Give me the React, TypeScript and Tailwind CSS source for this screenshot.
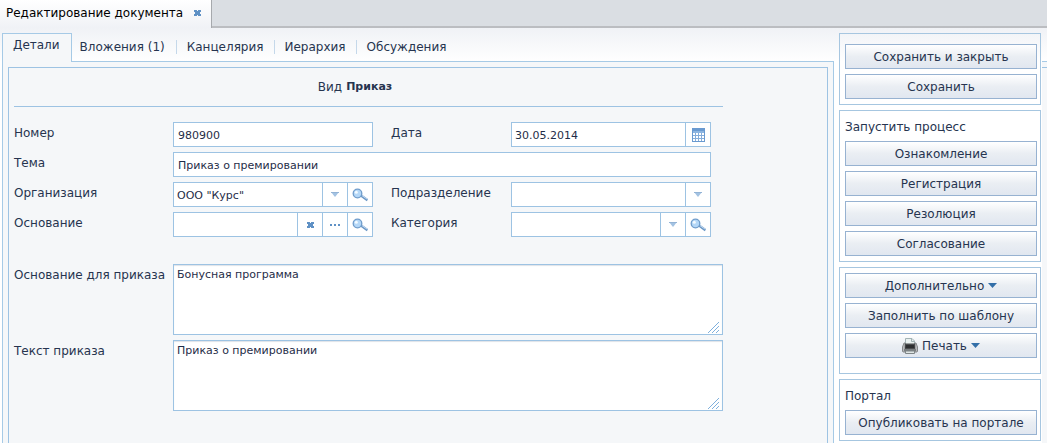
import React from "react";

const TEXT_FIELD =
  "h-[25px] w-full min-w-0 border border-[#9dc3e3] bg-white px-1 pt-px text-[11px] text-[#1f2d48] outline-none";
const CELL =
  "flex w-[25px] shrink-0 items-center justify-center border-l border-[#9dc3e3] bg-white";
const GROUP = "flex h-[25px] w-full min-w-0 border border-[#9dc3e3] bg-white";

function Cross() {
  return (
    <svg width="7" height="6" viewBox="0 0 7 6" shapeRendering="crispEdges" aria-hidden="true">
      <path d="M0 0h3v1h1V0h3v2H6v2h1v2H4V5H3v1H0V4h1V2H0z" fill="#5f91c5" />
    </svg>
  );
}

function Magnifier() {
  return (
    <svg width="16" height="14" viewBox="0 0 16 14" aria-hidden="true">
      <path d="M9 7.500l6.500 4.700" stroke="#6b97c6" strokeWidth="2.4" />
      <path d="M10 7.600l5.500 3.800" stroke="#c8def3" strokeWidth="1" />
      <circle cx="5.500" cy="5.500" r="4.300" fill="#b4d7f7" stroke="#6f9ccb" strokeWidth="1.3" />
      <circle cx="4.300" cy="4.200" r="1.500" fill="#f3faff" />
    </svg>
  );
}

function Calendar() {
  return (
    <svg width="13" height="14" viewBox="0 0 13 14" shapeRendering="crispEdges" aria-hidden="true">
      <path d="M0 0h13v14H0z" fill="#6a9ad0" />
      <path d="M1 3h11v2H1z" fill="#8db5e0" />
      <path d="M1 5h11v8H1z" fill="#86aedb" />
      <path
        d="M1 5h2v2H1zM4 5h2v2H4zM7 5h2v2H7zM10 5h2v2h-2zM1 8h2v2H1zM4 8h2v2H4zM7 8h2v2H7zM10 8h2v2h-2zM1 11h2v2H1zM4 11h2v2H4zM7 11h2v2H7zM10 11h2v2h-2z"
        fill="#fff"
      />
    </svg>
  );
}

function Printer() {
  return (
    <svg width="16" height="16" viewBox="0 0 16 16" aria-hidden="true">
      <path d="M3.500 7V.5h6.500l2.500 2.500V7z" fill="#eaf1f0" stroke="#a3b3b5" />
      <path d="M9.500 .5v3h3" fill="none" stroke="#a3b3b5" />
      <path d="M2 5h1v9H1L.5 13V9zM13 5h1l1.500 4v4l-.5 1h-2z" fill="#b9bbbd" stroke="#85888a" />
      <path d="M3 5.500h10V12H3z" fill="#4a4c4e" />
      <path d="M4 7h8l.5 3h-9z" fill="#2c2e30" />
      <path d="M2 11h12v2H2z" fill="#7a7e80" />
      <path d="M3.500 13h9v2.500h-9z" fill="#dfe5e4" stroke="#7f8688" />
    </svg>
  );
}

function Caret() {
  return (
    <svg width="9" height="5" viewBox="0 0 9 5" aria-hidden="true">
      <path d="M0 0h9L4.500 5z" fill="#336fa8" />
    </svg>
  );
}

function SideButton({ children }: { children: React.ReactNode }) {
  return (
    <button
      type="button"
      className="flex h-[25px] w-full items-center justify-center gap-1 border border-[#97b2d1] bg-linear-to-b from-white via-[#eaeef3] to-[#e1e7f0] leading-4 whitespace-nowrap"
    >
      {children}
    </button>
  );
}

function Label({ htmlFor, children, second }: { htmlFor: string; children: string; second?: boolean }) {
  return (
    <label
      htmlFor={htmlFor}
      className={second ? "pl-[18px] pt-[3px] leading-4 whitespace-nowrap" : "pt-[3px] leading-4 whitespace-nowrap"}
    >
      {children}
    </label>
  );
}

function Combo({ id, options }: { id: string; options: string[] }) {
  return (
    <div className="relative flex min-w-0 flex-1">
      <select
        id={id}
        className="w-full min-w-0 appearance-none bg-white pt-[2px] pr-7 pl-[3px] text-[11px] text-[#1f2d48] outline-none"
      >
        {options.map((o) => (
          <option key={o}>{o}</option>
        ))}
      </select>
      <span className="pointer-events-none absolute inset-y-0 right-0 flex w-[25px] items-center justify-center border-l border-[#9dc3e3]">
        <svg width="8" height="5" viewBox="0 0 8 5" aria-hidden="true">
          <path d="M0 0h8L4 5z" fill="#a3c2e2" />
          <path d="M0 0h8v1H0z" fill="#93b3d5" />
        </svg>
      </span>
    </div>
  );
}

function Area({ id, value }: { id: string; value: string }) {
  return (
    <div className="relative flex h-[71px]">
      <textarea
        id={id}
        defaultValue={value}
        className="w-full resize-none border border-[#9dc3e3] bg-white px-[3px] py-[3px] text-[11px] leading-[14px] text-[#1f2d48] shadow-[inset_0_1px_1px_#dfe3e8] outline-none"
      />
      <svg
        width="11"
        height="11"
        viewBox="0 0 11 11"
        aria-hidden="true"
        className="pointer-events-none absolute right-1 bottom-[2px]"
      >
        <path d="M0 11L11 0M4 11l7-7M8 11l3-3" stroke="#7fb0dd" strokeWidth="1" />
      </svg>
    </div>
  );
}

const BOX = "flex flex-col gap-[5px] border border-[#a6c6e0] pr-[3px] pl-[5px]";

export default function App() {
  return (
    <div className="flex min-h-screen flex-col bg-white font-['DejaVu_Sans',Verdana,sans-serif] text-[12px] leading-4 text-[#26344f]">
      <header className="flex h-7 shrink-0 bg-[#dadee3]">
        <div className="flex items-center gap-[11px] border-r border-[#a6a9ad] bg-linear-to-b from-white to-[#f0f2f6] pr-[10px] pb-[3px] pl-[6px] whitespace-nowrap text-black">
          Редактирование документа
          <button type="button" aria-label="Закрыть">
            <Cross />
          </button>
        </div>
        <div className="flex-1 border-b-2 border-[#bbbdc1]" />
      </header>

      <div className="flex flex-1 bg-linear-to-b from-[#f0f2f6] to-white to-[34px]">
        <main className="flex min-w-0 flex-1 flex-col pt-[5px] pl-[2px]">
          <nav className="flex h-[28px] items-stretch">
            <a
              href="#details"
              className="relative z-10 -mb-px flex border border-b-0 border-[#a6cae6] bg-[#f5f7f9] pt-[3px] pr-[11px] pl-[10px]"
            >
              Детали
            </a>
            <div className="flex flex-1 items-center pl-[8px] whitespace-nowrap">
              <a href="#files" className="border-r border-[#c5d8ea] pr-[11px] leading-[14px]">Вложения (1)</a>
              <a href="#office" className="border-r border-[#c5d8ea] px-[10px] leading-[14px]">Канцелярия</a>
              <a href="#tree" className="border-r border-[#c5d8ea] px-[10px] leading-[14px]">Иерархия</a>
              <a href="#talks" className="px-[10px] leading-[14px]">Обсуждения</a>
            </div>
          </nav>
          <div className="flex flex-1 flex-col border border-b-0 border-[#a6cae6] bg-[#f5f7f9] px-[5px] pt-[5px]">
            <form className="flex-1 border border-b-0 border-[#9dc3e3] px-[5px]">
              <div className="w-full max-w-[709px]">
                <h1 className="flex h-[39px] items-center justify-center gap-1 border-b border-[#9dc3e3] pr-[27px]">
                  Вид <b className="text-[11px]">Приказ</b>
                </h1>
                <div className="grid grid-cols-[159px_minmax(0,1fr)_138px_minmax(0,1fr)] gap-y-[5px] pt-[15px] pr-3">
                  <Label htmlFor="number">Номер</Label>
                  <input id="number" className={TEXT_FIELD} defaultValue="980900" />
                  <Label htmlFor="date" second>Дата</Label>
                  <div className={GROUP}>
                    <input
                      id="date"
                      className="min-w-0 flex-1 px-[3px] pt-[2px] text-[11px] text-[#1f2d48] outline-none"
                      defaultValue="30.05.2014"
                    />
                    <button type="button" aria-label="Календарь" className={CELL}><Calendar /></button>
                  </div>

                  <Label htmlFor="subject">Тема</Label>
                  <div className="col-span-3 flex">
                    <input id="subject" className={TEXT_FIELD} defaultValue="Приказ о премировании" />
                  </div>

                  <Label htmlFor="org">Организация</Label>
                  <div className={GROUP}>
                    <Combo id="org" options={['ООО "Курс"']} />
                    <button type="button" aria-label="Найти организацию" className={CELL}><Magnifier /></button>
                  </div>
                  <Label htmlFor="unit" second>Подразделение</Label>
                  <div className={GROUP}>
                    <Combo id="unit" options={[""]} />
                  </div>

                  <Label htmlFor="basis">Основание</Label>
                  <div className={GROUP}>
                    <input id="basis" className="min-w-0 flex-1 px-[3px] text-[11px] outline-none" />
                    <button type="button" aria-label="Очистить" className={CELL}><Cross /></button>
                    <button type="button" aria-label="Выбрать" className={CELL}>
                      <svg width="10" height="2" viewBox="0 0 10 2" shapeRendering="crispEdges" aria-hidden="true">
                        <path d="M0 0h2v2H0zM4 0h2v2H4zM8 0h2v2H8z" fill="#5f91c5" />
                      </svg>
                    </button>
                    <button type="button" aria-label="Найти основание" className={CELL}><Magnifier /></button>
                  </div>
                  <Label htmlFor="category" second>Категория</Label>
                  <div className={GROUP}>
                    <Combo id="category" options={[""]} />
                    <button type="button" aria-label="Найти категорию" className={CELL}><Magnifier /></button>
                  </div>
                </div>

                <div className="grid grid-cols-[159px_minmax(0,1fr)] gap-y-[5px] pt-[27px]">
                  <Label htmlFor="reason">Основание для приказа</Label>
                  <Area id="reason" value="Бонусная программа" />
                  <Label htmlFor="body">Текст приказа</Label>
                  <Area id="body" value="Приказ о премировании" />
                </div>
              </div>
            </form>
          </div>
        </main>

        <aside className="flex w-[208px] shrink-0 flex-col gap-[5px] pt-[5px] pr-px pb-[2px] pl-[5px]">
          <section className={`${BOX} pt-[10px] pb-[5px]`}>
            <SideButton>Сохранить и закрыть</SideButton>
            <SideButton>Сохранить</SideButton>
          </section>
          <section className={`${BOX} pt-[8px] pb-[5px]`}>
            <h2 className="pb-px">Запустить процесс</h2>
            <SideButton>Ознакомление</SideButton>
            <SideButton>Регистрация</SideButton>
            <SideButton>Резолюция</SideButton>
            <SideButton>Согласование</SideButton>
          </section>
          <section className={`${BOX} pt-[5px] pb-[15px]`}>
            <SideButton>Дополнительно <Caret /></SideButton>
            <SideButton>Заполнить по шаблону</SideButton>
            <SideButton><Printer /> Печать <Caret /></SideButton>
          </section>
          <section className={`${BOX} pt-[8px] pb-[5px]`}>
            <h2 className="pb-px">Портал</h2>
            <SideButton>Опубликовать на портале</SideButton>
          </section>
        </aside>
        <div className="flex w-[5px] shrink-0 flex-col pt-[33px]">
          <div className="flex-1 border-t border-[#a6cae6] bg-[#f5f7f9] pt-[5px]">
            <div className="border-t border-[#9dc3e3]" />
          </div>
        </div>
      </div>
    </div>
  );
}
